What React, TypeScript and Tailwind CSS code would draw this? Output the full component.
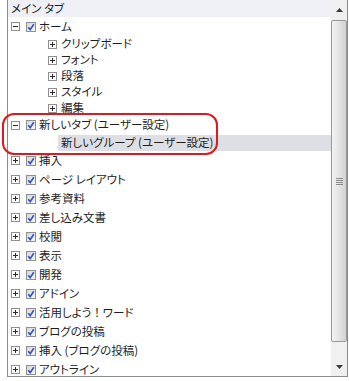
import type { ReactNode } from 'react'

const TABS: ReactNode[] = [
  '挿入',
  'ページ レイアウト',
  '参考資料',
  '差し込み文書',
  '校閲',
  '表示',
  '開発',
  'アドイン',
  <>
    活用しよう<span className="[font-feature-settings:normal]">！</span>ワード
  </>,
  'ブログの投稿',
  '挿入 (ブログの投稿)',
  'アウトライン',
]

const HOME_GROUPS = ['クリップボード', 'フォント', '段落', 'スタイル', '編集']

function Expander({ open }: { open?: boolean }) {
  return (
    <svg width="9" height="9" viewBox="0 0 9 9" className="shrink-0">
      <rect x="0.5" y="0.5" width="8" height="8" fill="#fff" stroke="#8f8f8f" />
      <path d="M2 4.5h5" stroke="#2b2b2b" />
      {!open && <path d="M4.5 2v5" stroke="#2b2b2b" />}
    </svg>
  )
}

function Check() {
  return (
    <svg width="10" height="10" viewBox="0 0 10 10" className="shrink-0">
      <defs>
        <linearGradient id="cb" x1="0" y1="0" x2="1" y2="1">
          <stop offset="0" stopColor="#d6d6d6" />
          <stop offset="1" stopColor="#f7f7f7" />
        </linearGradient>
      </defs>
      <rect x="0.5" y="0.5" width="9" height="9" fill="url(#cb)" stroke="#8e8f8f" />
      <path d="M2.3 5.2 4.2 7.6 7.8 2.2" fill="none" stroke="#2f4fc4" strokeWidth="1.6" />
    </svg>
  )
}

function TabRow({ label, open, h = 'h-[19px]' }: { label: ReactNode; open?: boolean; h?: string }) {
  return (
    <div className={`flex items-center pl-[3px] ${h}`}>
      <Expander open={open} />
      <div className="ml-[6px]">
        <Check />
      </div>
      <span className="ml-[3px] whitespace-nowrap leading-none">{label}</span>
    </div>
  )
}

function GroupRow({ label }: { label: string }) {
  return (
    <div className="flex h-4 items-center pl-[40px]">
      <Expander />
      <span className="ml-[4px] whitespace-nowrap leading-none">{label}</span>
    </div>
  )
}

function Scrollbar() {
  return (
    <div className="flex w-4 flex-col bg-[#f0f0f0]">
      <div className="flex h-5 items-center justify-center">
        <svg width="7" height="4" viewBox="0 0 7 4">
          <path d="M0 4 3.5 0 7 4z" fill="#3c3c3c" />
        </svg>
      </div>
      <div className="flex h-[322px] items-center justify-center rounded-[2px] border border-[#979797] bg-gradient-to-r from-[#f3f3f3] via-[#e4e4e4] to-[#d2d2d2]">
        <div className="flex flex-col gap-[1px]">
          <div className="h-[1px] w-[7px] bg-[#8a8a8a]" />
          <div className="h-[1px] w-[7px] bg-[#8a8a8a]" />
          <div className="h-[1px] w-[7px] bg-[#8a8a8a]" />
          <div className="h-[1px] w-[7px] bg-[#8a8a8a]" />
        </div>
      </div>
      <div className="flex flex-1 items-end justify-center pb-[7px]">
        <svg width="7" height="4" viewBox="0 0 7 4">
          <path d="M0 0 3.5 4 7 0z" fill="#3c3c3c" />
        </svg>
      </div>
    </div>
  )
}

export default function App() {
  return (
    <div className="relative h-[381px] w-[349px] overflow-hidden bg-white font-['Noto_Sans_CJK_JP','Noto_Sans',sans-serif] text-[11.5px] text-[#1e1e1e] [font-feature-settings:'palt']">
      <div className="ml-[7px] flex h-[377px] w-[341px] border-x border-b border-[#8a8c90]">
        <div className="flex-1 overflow-hidden">
          <div className="flex h-[17px] items-center bg-[#eef0f5] pl-[3px] leading-none">
            メイン タブ
          </div>
          <TabRow label="ホーム" open />
          {HOME_GROUPS.map((g) => (
            <GroupRow key={g} label={g} />
          ))}
          <TabRow label="新しいタブ (ユーザー設定)" open h="h-[18px]" />
          <div className="ml-[50px] mt-[1px] flex h-4 items-center bg-[#dedee5] pl-[3px]">
            <span className="whitespace-nowrap leading-none">新しいグループ (ユーザー設定)</span>
          </div>
          {TABS.map((t, i) => (
            <TabRow key={i} label={t} />
          ))}
        </div>
        <Scrollbar />
      </div>
      <div className="pointer-events-none absolute left-[2px] top-[113px] h-[42px] w-[216px] rounded-[12px] border-2 border-[#e0191f]" />
    </div>
  )
}
